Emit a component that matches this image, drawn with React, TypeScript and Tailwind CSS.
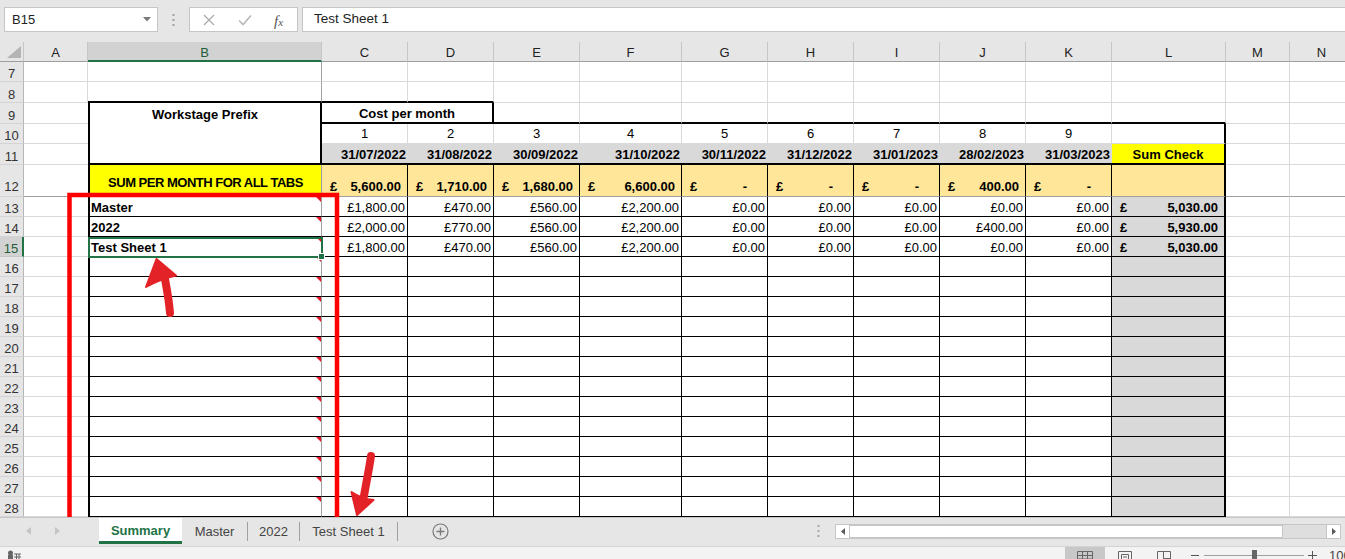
import clsx from 'clsx'
import { twMerge } from 'tailwind-merge'
import type { ReactNode } from 'react'

// column widths (px) taken from the sheet
const W: Record<string, string> = {
  A: 'w-[64px]',
  B: 'w-[234px]',
  C: 'w-[86px]',
  D: 'w-[86px]',
  CD: 'w-[172px]',
  E: 'w-[86px]',
  F: 'w-[102px]',
  G: 'w-[86px]',
  H: 'w-[86px]',
  I: 'w-[86px]',
  J: 'w-[86px]',
  K: 'w-[86px]',
  L: 'w-[114px]',
  M: 'w-[64px]',
  N: 'w-[64px]',
}

const LETTERS = ['A', 'B', 'C', 'D', 'E', 'F', 'G', 'H', 'I', 'J', 'K', 'L', 'M', 'N']
const MONTHS = ['C', 'D', 'E', 'F', 'G', 'H', 'I', 'J', 'K']
const DATES = [
  '31/07/2022',
  '31/08/2022',
  '30/09/2022',
  '31/10/2022',
  '30/11/2022',
  '31/12/2022',
  '31/01/2023',
  '28/02/2023',
  '31/03/2023',
]
const TOTALS = ['5,600.00', '1,710.00', '1,680.00', '6,600.00', '-', '-', '-', '400.00', '-']

const DATA = [
  {
    name: 'Master',
    vals: ['£1,800.00', '£470.00', '£560.00', '£2,200.00', '£0.00', '£0.00', '£0.00', '£0.00', '£0.00'],
    sum: '5,030.00',
  },
  {
    name: '2022',
    vals: ['£2,000.00', '£770.00', '£560.00', '£2,200.00', '£0.00', '£0.00', '£0.00', '£400.00', '£0.00'],
    sum: '5,930.00',
  },
  {
    name: 'Test Sheet 1',
    vals: ['£1,800.00', '£470.00', '£560.00', '£2,200.00', '£0.00', '£0.00', '£0.00', '£0.00', '£0.00'],
    sum: '5,030.00',
  },
]

const GRID = 'border-r border-b border-[#dadada]'

function Cell({ col, className, children }: { col: string; className?: string; children?: ReactNode }) {
  return (
    <div className={twMerge('relative flex h-full shrink-0 items-end pb-[1px] leading-[15px]', W[col], className)}>
      {children}
    </div>
  )
}

function Row({ n, h, selected, children }: { n: number; h: string; selected?: boolean; children: ReactNode }) {
  return (
    <div className={clsx('flex shrink-0', h)}>
      <div
        className={clsx(
          'flex w-[24px] shrink-0 items-end justify-center border-b leading-[15px]',
          n === 12 ? 'pb-[2px]' : 'pb-0',
          selected
            ? 'border-r-2 border-r-[#217346] border-b-[#c6c6c6] bg-[#d2d2d2] text-[#1e5c3a]'
            : 'border-r border-r-[#b6b6b6] border-b-[#d4d4d4] bg-[#e6e6e6] text-[#333]'
        )}
      >
        {n}
      </div>
      {children}
    </div>
  )
}

function Accounting({ value }: { value: string }) {
  return (
    <div
      className={clsx(
        'flex w-full justify-between pl-[8px] font-bold',
        value === '-' ? 'pr-[20px]' : 'pr-[6px]'
      )}
    >
      <span>£</span>
      <span>{value}</span>
    </div>
  )
}

function CommentMark() {
  return (
    <div className="absolute top-0 right-0 h-0 w-0 border-t-[5px] border-l-[5px] border-t-[#e81123] border-l-transparent" />
  )
}

function TopBar() {
  return (
    <div className="flex h-[42px] shrink-0 items-start bg-[#e6e6e6] pt-[7px] pl-[4px]">
      <div className="flex h-[25px] w-[154px] items-center justify-between border border-[#c6c6c6] bg-white pr-[6px] pl-[7px] text-[13px] text-[#222]">
        <span>B15</span>
        <svg width="8" height="5" viewBox="0 0 8 5">
          <path d="M0 0h8L4 4.5z" fill="#7a7a7a" />
        </svg>
      </div>
      <div className="flex h-[25px] w-[31px] items-center justify-center">
        <svg width="3" height="12" viewBox="0 0 3 12">
          <rect x="0.5" y="0" width="2" height="2" fill="#a0a0a0" />
          <rect x="0.5" y="5" width="2" height="2" fill="#a0a0a0" />
          <rect x="0.5" y="10" width="2" height="2" fill="#a0a0a0" />
        </svg>
      </div>
      <div className="relative h-[25px] w-[109px] border border-[#c6c6c6] bg-white">
        <svg className="absolute top-[6px] left-[13px]" width="12" height="12" viewBox="0 0 12 12">
          <path d="M1 1l10 10M11 1L1 11" stroke="#ababab" strokeWidth="1.3" />
        </svg>
        <svg className="absolute top-[6px] left-[48px]" width="14" height="12" viewBox="0 0 14 12">
          <path d="M1 6.5l4 4L13 1.5" stroke="#b8b8b8" strokeWidth="1.6" fill="none" />
        </svg>
        <span className="absolute top-[2px] left-[84px] font-['Liberation_Serif',serif] text-[15px] text-[#555] italic">
          f<span className="text-[11px]">x</span>
        </span>
      </div>
      <div className="ml-[4px] flex h-[25px] flex-1 items-center border border-r-0 border-[#c6c6c6] bg-white pl-[11px] text-[13.5px] text-[#222]">
        Test Sheet 1
      </div>
    </div>
  )
}

function ColumnHeader() {
  return (
    <div className="flex h-[20px] shrink-0 bg-[#e6e6e6]">
      <div className="relative w-[24px] shrink-0 border-r border-b border-r-[#c6c6c6] border-b-[#9e9e9e]">
        <svg className="absolute top-[4px] left-[5px]" width="16" height="12" viewBox="0 0 16 12">
          <path d="M16 0V12H2z" fill="#b4b4b4" />
        </svg>
      </div>
      {LETTERS.map((l) => (
        <div
          key={l}
          className={clsx(
            'flex shrink-0 items-center justify-center border-r border-r-[#c6c6c6] pt-[3px]',
            W[l],
            l === 'B'
              ? 'border-b-2 border-b-[#217346] bg-[#d2d2d2] text-[#1e5c3a]'
              : 'border-b border-b-[#9e9e9e] text-[#222]'
          )}
        >
          {l}
        </div>
      ))}
    </div>
  )
}

function Sheet() {
  return (
    <div className="flex shrink-0 flex-col text-[13px] text-black">
      <Row n={7} h="h-[20px]">
        <Cell col="A" className={GRID} />
        <Cell col="B" className="border-r border-b border-r-[#a0a0a0] border-b-[#dadada]" />
        {LETTERS.slice(2).map((c) => (
          <Cell key={c} col={c} className={GRID} />
        ))}
      </Row>

      <Row n={8} h="h-[21px]">
        <Cell col="A" className={GRID} />
        <Cell col="B" className="border-r border-b-2 border-r-[#a0a0a0] border-b-black" />
        {['C', 'D'].map((c) => (
          <Cell key={c} col={c} className="border-r border-b-2 border-r-[#dadada] border-b-black" />
        ))}
        {LETTERS.slice(4).map((c) => (
          <Cell key={c} col={c} className={GRID} />
        ))}
      </Row>

      <Row n={9} h="h-[21px]">
        <Cell col="A" className="border-b border-b-[#dadada]" />
        <Cell col="B" className="items-center justify-center border-x-2 border-black pt-[2px] pb-0 font-bold">
          Workstage Prefix
        </Cell>
        <Cell col="CD" className="items-center justify-center border-r-2 border-b-2 border-black pt-[2px] pb-0 font-bold">
          Cost per month
        </Cell>
        {['E', 'F', 'G', 'H', 'I', 'J', 'K', 'L'].map((c) => (
          <Cell key={c} col={c} className="border-r border-b-2 border-r-[#dadada] border-b-black" />
        ))}
        <Cell col="M" className={GRID} />
        <Cell col="N" className={GRID} />
      </Row>

      <Row n={10} h="h-[20px]">
        <Cell col="A" className="border-b border-b-[#dadada]" />
        <Cell col="B" className="border-x-2 border-black" />
        {MONTHS.map((c, i) => (
          <Cell key={c} col={c} className={clsx(GRID, 'justify-center pb-[2px]')}>
            {i + 1}
          </Cell>
        ))}
        <Cell col="L" className="border-r-2 border-b border-r-black border-b-[#dadada]" />
        <Cell col="M" className={GRID} />
        <Cell col="N" className={GRID} />
      </Row>

      <Row n={11} h="h-[21px]">
        <Cell col="A" className="border-b border-b-[#dadada]" />
        <Cell col="B" className="border-x-2 border-b-2 border-black" />
        {MONTHS.map((c, i) => (
          <Cell key={c} col={c} className="justify-end border-b-2 border-b-black bg-[#d9d9d9] pr-[2px] font-bold">
            {DATES[i]}
          </Cell>
        ))}
        <Cell col="L" className="justify-center border-r-2 border-b-2 border-black bg-[#ffff00] font-bold">
          Sum Check
        </Cell>
        <Cell col="M" className={GRID} />
        <Cell col="N" className={GRID} />
      </Row>

      <Row n={12} h="h-[32px]">
        <Cell col="A" className="border-b border-b-[#a0a0a0]" />
        <Cell
          col="B"
          className="items-center justify-center border-r border-b border-l-2 border-r-[#a0a0a0] border-b-[#a0a0a0] border-l-black bg-[#ffff00] pt-[4px] pb-0 font-bold tracking-[-0.5px]"
        >
          SUM PER MONTH FOR ALL TABS
        </Cell>
        {MONTHS.map((c, i) => (
          <Cell key={c} col={c} className="border-r border-b border-r-black border-b-[#a0a0a0] bg-[#ffe699] pb-[2px]">
            <Accounting value={TOTALS[i]} />
          </Cell>
        ))}
        <Cell col="L" className="border-r-2 border-b border-r-black border-b-[#a0a0a0] bg-[#ffe699]" />
        <Cell col="M" className="border-r border-b border-r-[#dadada] border-b-[#a0a0a0]" />
        <Cell col="N" className="border-r border-b border-r-[#dadada] border-b-[#a0a0a0]" />
      </Row>

      {Array.from({ length: 16 }, (_, r) => {
        const d = DATA[r]
        const n = 13 + r
        return (
          <Row key={n} n={n} h="h-[20px]" selected={n === 15}>
            <Cell col="A" className="border-b border-b-[#dadada]" />
            <Cell col="B" className="border-r border-b border-l-2 border-r-[#a0a0a0] border-b-black border-l-black pl-[1px] font-bold">
              {d?.name}
              <CommentMark />
              {n === 15 && (
                <div className="absolute top-0 -right-[2px] -bottom-[2px] -left-[2px] z-10 border-2 border-[#217346]">
                  <div className="absolute -right-[4px] -bottom-[4px] h-[7px] w-[7px] border border-white bg-[#217346]" />
                </div>
              )}
            </Cell>
            {MONTHS.map((c, i) => (
              <Cell key={c} col={c} className="justify-end border-r border-b border-black pr-[2px]">
                {d?.vals[i]}
              </Cell>
            ))}
            <Cell col="L" className="border-r-2 border-b border-r-black border-b-black bg-[#d9d9d9]">
              {d && <Accounting value={d.sum} />}
            </Cell>
            <Cell col="M" className={GRID} />
            <Cell col="N" className={GRID} />
          </Row>
        )
      })}
    </div>
  )
}

function SheetTabs() {
  return (
    <div className="relative flex h-[29px] shrink-0 items-start border-t border-[#c6c6c6] bg-[#e6e6e6] text-[13px] text-[#444]">
      <div className="flex h-[26px] w-[99px] shrink-0 items-center pl-[26px]">
        <svg width="5" height="8" viewBox="0 0 5 8">
          <path d="M5 0v8L0 4z" fill="#c4c4c4" />
        </svg>
        <svg className="ml-[24px]" width="5" height="8" viewBox="0 0 5 8">
          <path d="M0 0v8l5-4z" fill="#c4c4c4" />
        </svg>
      </div>
      <div className="flex h-[26px] w-[83px] shrink-0 items-center justify-center border-b-[3px] border-[#217346] bg-white pt-[2px] font-bold text-[#217346]">
        Summary
      </div>
      <div className="flex h-[26px] w-[65px] shrink-0 items-center justify-center pt-[1px]">Master</div>
      <div className="mt-[4px] h-[19px] w-px shrink-0 bg-[#a0a0a0]" />
      <div className="flex h-[26px] w-[51px] shrink-0 items-center justify-center pt-[1px]">2022</div>
      <div className="mt-[4px] h-[19px] w-px shrink-0 bg-[#a0a0a0]" />
      <div className="flex h-[26px] w-[97px] shrink-0 items-center justify-center pt-[1px]">Test Sheet 1</div>
      <div className="mt-[4px] h-[19px] w-px shrink-0 bg-[#a0a0a0]" />
      <div className="flex h-[26px] w-[84px] shrink-0 items-center justify-center">
        <svg width="17" height="17" viewBox="0 0 17 17">
          <circle cx="8.5" cy="8.5" r="7.5" fill="none" stroke="#7a7a7a" strokeWidth="1.2" />
          <path d="M8.5 4.5v8M4.5 8.5h8" stroke="#7a7a7a" strokeWidth="1.4" />
        </svg>
      </div>
      <div className="ml-auto flex h-[26px] items-center pr-[4px]">
        <svg className="mr-[15px]" width="3" height="12" viewBox="0 0 3 12">
          <rect x="0.5" y="0" width="2" height="2" fill="#a8a8a8" />
          <rect x="0.5" y="5" width="2" height="2" fill="#a8a8a8" />
          <rect x="0.5" y="10" width="2" height="2" fill="#a8a8a8" />
        </svg>
        <div className="flex h-[15px] w-[506px] border border-[#c6c6c6] bg-white">
          <div className="flex w-[13px] items-center justify-center">
            <svg width="4" height="7" viewBox="0 0 4 7">
              <path d="M4 0v7L0 3.5z" fill="#5a5a5a" />
            </svg>
          </div>
          <div className="w-[434px] border border-[#c6c6c6] bg-white" />
          <div className="flex-1 bg-[#dedede]" />
          <div className="flex w-[14px] items-center justify-center border-l border-[#c6c6c6]">
            <svg width="4" height="7" viewBox="0 0 4 7">
              <path d="M0 0v7l4-3.5z" fill="#5a5a5a" />
            </svg>
          </div>
        </div>
      </div>
    </div>
  )
}

function StatusBar() {
  return (
    <div className="relative h-[13px] shrink-0 overflow-hidden border-t border-[#d4d4d4] bg-[#f3f3f3] text-[13px] text-[#444]">
      <svg className="absolute top-[3px] left-[7px]" width="14" height="12" viewBox="0 0 14 12">
        <circle cx="3.5" cy="3" r="2.5" fill="#666" />
        <rect x="1" y="5" width="5" height="4" fill="#666" />
        <path d="M7 4h7M7 7h7M7 10h7M9.5 4v8M12 4v8" stroke="#666" strokeWidth="1" />
      </svg>
      <div className="absolute top-0 left-[1065px] h-[13px] w-[40px] bg-[#c8c8c8]" />
      <svg className="absolute top-[4px] left-[1077px]" width="16" height="12" viewBox="0 0 16 12">
        <path d="M0.5 0.5h15v11h-15zM0.5 4.5h15M0.5 8h15M5.5 0.5v11M10.5 0.5v11" fill="none" stroke="#666" />
      </svg>
      <svg className="absolute top-[4px] left-[1118px]" width="14" height="12" viewBox="0 0 14 12">
        <path d="M0.5 0.5h13v11h-13zM3.5 3.5h7v8h-7zM5 6h4M5 8.5h4" fill="none" stroke="#666" />
      </svg>
      <svg className="absolute top-[4px] left-[1157px]" width="14" height="12" viewBox="0 0 14 12">
        <path d="M0.5 0.5h13v11h-13zM6.5 0.5v7h7M6.5 7.5v4" fill="none" stroke="#666" />
      </svg>
      <div className="absolute top-[8px] left-[1191px] h-px w-[8px] bg-[#555]" />
      <div className="absolute top-[8px] left-[1204px] h-px w-[100px] bg-[#a0a0a0]" />
      <div className="absolute top-[3px] left-[1252px] h-[10px] w-[5px] bg-[#666]" />
      <div className="absolute top-[8px] left-[1308px] h-px w-[9px] bg-[#555]" />
      <div className="absolute top-[4px] left-[1312px] h-[9px] w-px bg-[#555]" />
      <span className="absolute top-[1px] left-[1329px] leading-[15px]">100%</span>
    </div>
  )
}

// red marker annotations drawn over the sheet
function Annotations() {
  return (
    <svg className="pointer-events-none absolute top-0 left-0 z-20" width="1345" height="559" viewBox="0 0 1345 559">
      <path d="M69.5 517V195H337V517" fill="none" stroke="#ff0000" strokeWidth="4.5" />
      <path d="M170 313 C169 300 167 290 165 279" fill="none" stroke="#e32227" strokeWidth="8" strokeLinecap="round" />
      <path d="M156.5 259 L146 287 Q160 279 176 275.5 Z" fill="#e32227" stroke="#e32227" strokeWidth="2" strokeLinejoin="round" />
      <path d="M371 456 C369 470 366 484 364 496" fill="none" stroke="#e32227" strokeWidth="8" strokeLinecap="round" />
      <path d="M351.5 492 L357 515 L373.5 500 Q362 499 351.5 492 Z" fill="#e32227" stroke="#e32227" strokeWidth="2" strokeLinejoin="round" />
    </svg>
  )
}

export default function App() {
  return (
    <div className="relative flex h-[559px] w-[1345px] flex-col overflow-hidden bg-white font-['Liberation_Sans',Arial,sans-serif] text-[13px]">
      <TopBar />
      <ColumnHeader />
      <Sheet />
      <SheetTabs />
      <StatusBar />
      <Annotations />
    </div>
  )
}
